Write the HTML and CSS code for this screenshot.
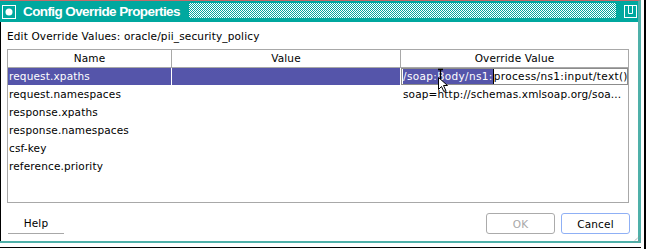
FILE: index.html
```html
<!DOCTYPE html>
<html>
<head>
<meta charset="utf-8">
<link rel="stylesheet" href="styles.css">
</head>
<body>
<div class="screen">
  <div class="main">
    <div class="dialog">
      <div class="titlebar">
        <svg class="ticon" viewBox="0 0 14 14"><rect x="0.5" y="0.5" width="13" height="13" fill="none" stroke="#fff"/><circle cx="7" cy="7" r="3.5" fill="#fff"/></svg>
        <span class="title">Config Override Properties</span>
        <div class="dither"></div>
        <svg class="maxicon" viewBox="0 0 13 13"><rect x="0.5" y="0.5" width="12" height="12" fill="none" stroke="#fff"/><path d="M4.5 1V8.5H8.5V1" fill="none" stroke="#fff"/></svg>
      </div>
      <div class="body">
        <div class="label">Edit Override Values: oracle/pii_security_policy</div>
        <div class="table">
          <div class="thead">
            <div class="th">Name</div>
            <div class="th">Value</div>
            <div class="th">Override Value</div>
          </div>
          <div class="tbody">
            <div class="row sel">
              <div class="td n">request.xpaths</div>
              <div class="td v"></div>
              <div class="td o ed"><div class="editor"><span class="selt">/soap:Body/ns1:</span><span class="caret"></span><span>process/ns1:input/text()</span></div></div>
            </div>
            <div class="row">
              <div class="td n">request.namespaces</div>
              <div class="td v"></div>
              <div class="td o">soap=http://schemas.xmlsoap.org/soa...</div>
            </div>
            <div class="row">
              <div class="td n">response.xpaths</div>
              <div class="td v"></div>
              <div class="td o"></div>
            </div>
            <div class="row">
              <div class="td n">response.namespaces</div>
              <div class="td v"></div>
              <div class="td o"></div>
            </div>
            <div class="row">
              <div class="td n">csf-key</div>
              <div class="td v"></div>
              <div class="td o"></div>
            </div>
            <div class="row">
              <div class="td n">reference.priority</div>
              <div class="td v"></div>
              <div class="td o"></div>
            </div>
            <svg class="cursor" viewBox="0 0 18 26"><path d="M2 1.5H7M4.5 1.5V14.5M2 14.5H7" fill="none" stroke="#000" stroke-width="1.3"/><path d="M2.5 9.5V21.5L5.5 18.5L7.8 23.5L9.8 22.5L7.5 17.5H11.5Z" fill="#fff" stroke="#000"/></svg>
          </div>
        </div>
        <div class="buttons">
          <button class="btn help">Help</button>
          <div class="spacer"></div>
          <button class="btn ok">OK</button>
          <button class="btn cancel">Cancel</button>
        </div>
      </div>
      <svg class="grip" viewBox="0 0 9 9"><path d="M8.5 1L1 8.5M8.5 4.5L4.5 8.5M8.5 7.5L7.5 8.5" fill="none" stroke="#8a8a8a" stroke-dasharray="1 1"/></svg>
    </div>
    <div class="desktop"><div class="dline"></div></div>
  </div>
  <div class="gap"></div>
  <div class="vline"></div>
</div>
</body>
</html>
```
FILE: styles.css
```css
* { box-sizing: border-box; }
body {
  margin: 0;
  width: 648px;
  height: 249px;
  overflow: hidden;
  background: #fff;
  font-family: "DejaVu Sans", sans-serif;
  font-size: 10.5px;
  letter-spacing: 0.15px;
  color: #000;
}
.screen { display: flex; height: 249px; }
.main { width: 641px; flex: none; display: flex; flex-direction: column; }
.gap { width: 3px; flex: none; }
.vline { width: 2px; flex: none; background: #000; }

.dialog {
  position: relative;
  height: 243px;
  flex: none;
  border-top: 1px solid #c46a6a;
  border-right: 3px solid #4fb0a9;
  border-bottom: 2px solid #4fb0a9;
  display: flex;
  flex-direction: column;
}
.titlebar {
  height: 21px;
  flex: none;
  background: #00a89f;
  display: flex;
  align-items: center;
  padding-left: 2px;
  padding-right: 1px;
}
.ticon { width: 14px; height: 14px; flex: none; }
.title {
  width: 166px;
  flex: none;
  margin-left: 7px;
  color: #fff;
  font-family: "Liberation Sans", sans-serif;
  font-weight: bold;
  font-size: 13.5px;
  letter-spacing: -0.6px;
  line-height: 21px;
  white-space: nowrap;
  overflow: hidden;
}
.dither {
  flex: 1;
  align-self: flex-start;
  margin-top: 2px;
  height: 15px;
  background: repeating-conic-gradient(#fff 0 25%, #00a89f 0 50%) 0 0 / 2px 2px;
}
.maxicon { width: 13px; height: 13px; flex: none; margin-left: 8px; }

.body {
  flex: 1;
  border-left: 1px solid #000;
  padding: 7px 9px 0 6px;
  display: flex;
  flex-direction: column;
}
.label { height: 14px; line-height: 14px; margin-bottom: 6px; white-space: nowrap; }

.table {
  height: 154px;
  flex: none;
  border: 1px solid #a8a8a8;
  display: flex;
  flex-direction: column;
}
.thead {
  display: grid;
  grid-template-columns: 164px 229px 227px;
  height: 18px;
  flex: none;
  border-bottom: 1px solid #a8a8a8;
}
.th { border-right: 1px solid #a8a8a8; text-align: center; line-height: 17px; }
.th:last-child { border-right: none; }

.tbody { flex: 1; position: relative; }
.row {
  display: grid;
  grid-template-columns: 164px 229px 227px;
  height: 18px;
  border-bottom: 1px solid #fff;
}
.td {
  border-right: 1px solid #fff;
  line-height: 17px;
  padding-left: 1px;
  white-space: nowrap;
  overflow: hidden;
}
.td.o { border-right: none; padding-left: 2px; }
.td.ed { padding-left: 0; }
.row.sel .n, .row.sel .v { background: #5555aa; color: #fff; }

.editor {
  height: 17px;
  border: 1px solid #8c8c8c;
  background: #fff;
  display: flex;
  overflow: hidden;
  white-space: nowrap;
  line-height: 15px;
  padding-left: 1px;
  letter-spacing: 0.35px;
}
.editor span { flex: none; }
.selt { background: #5555aa; color: #fff; }
.caret { width: 1px; background: #000; }

.cursor {
  position: absolute;
  left: 428px;
  top: 0;
  width: 18px;
  height: 26px;
}

.buttons {
  display: flex;
  height: 21px;
  margin-top: 10px;
  margin-right: -1px;
}
.btn {
  font-family: inherit;
  font-size: 10.5px;
  letter-spacing: 0.15px;
  height: 21px;
  padding: 0;
  background: #fff;
  color: #000;
}
.help {
  width: 56px;
  margin-left: 1px;
  border: none;
  border-bottom: 1px solid #a8a8a8;
}
.spacer { flex: 1; }
.ok {
  width: 69px;
  border: 1px solid #ababab;
  border-radius: 3px;
  color: #a8a8a8;
}
.cancel {
  width: 69px;
  margin-left: 6px;
  border: 1px solid #8fb0f5;
  border-radius: 3px;
}
.grip {
  position: absolute;
  right: -3px;
  bottom: -2px;
  width: 9px;
  height: 9px;
}
.desktop { height: 6px; padding-top: 4px; }
.dline { height: 1px; background: #000; }
```
